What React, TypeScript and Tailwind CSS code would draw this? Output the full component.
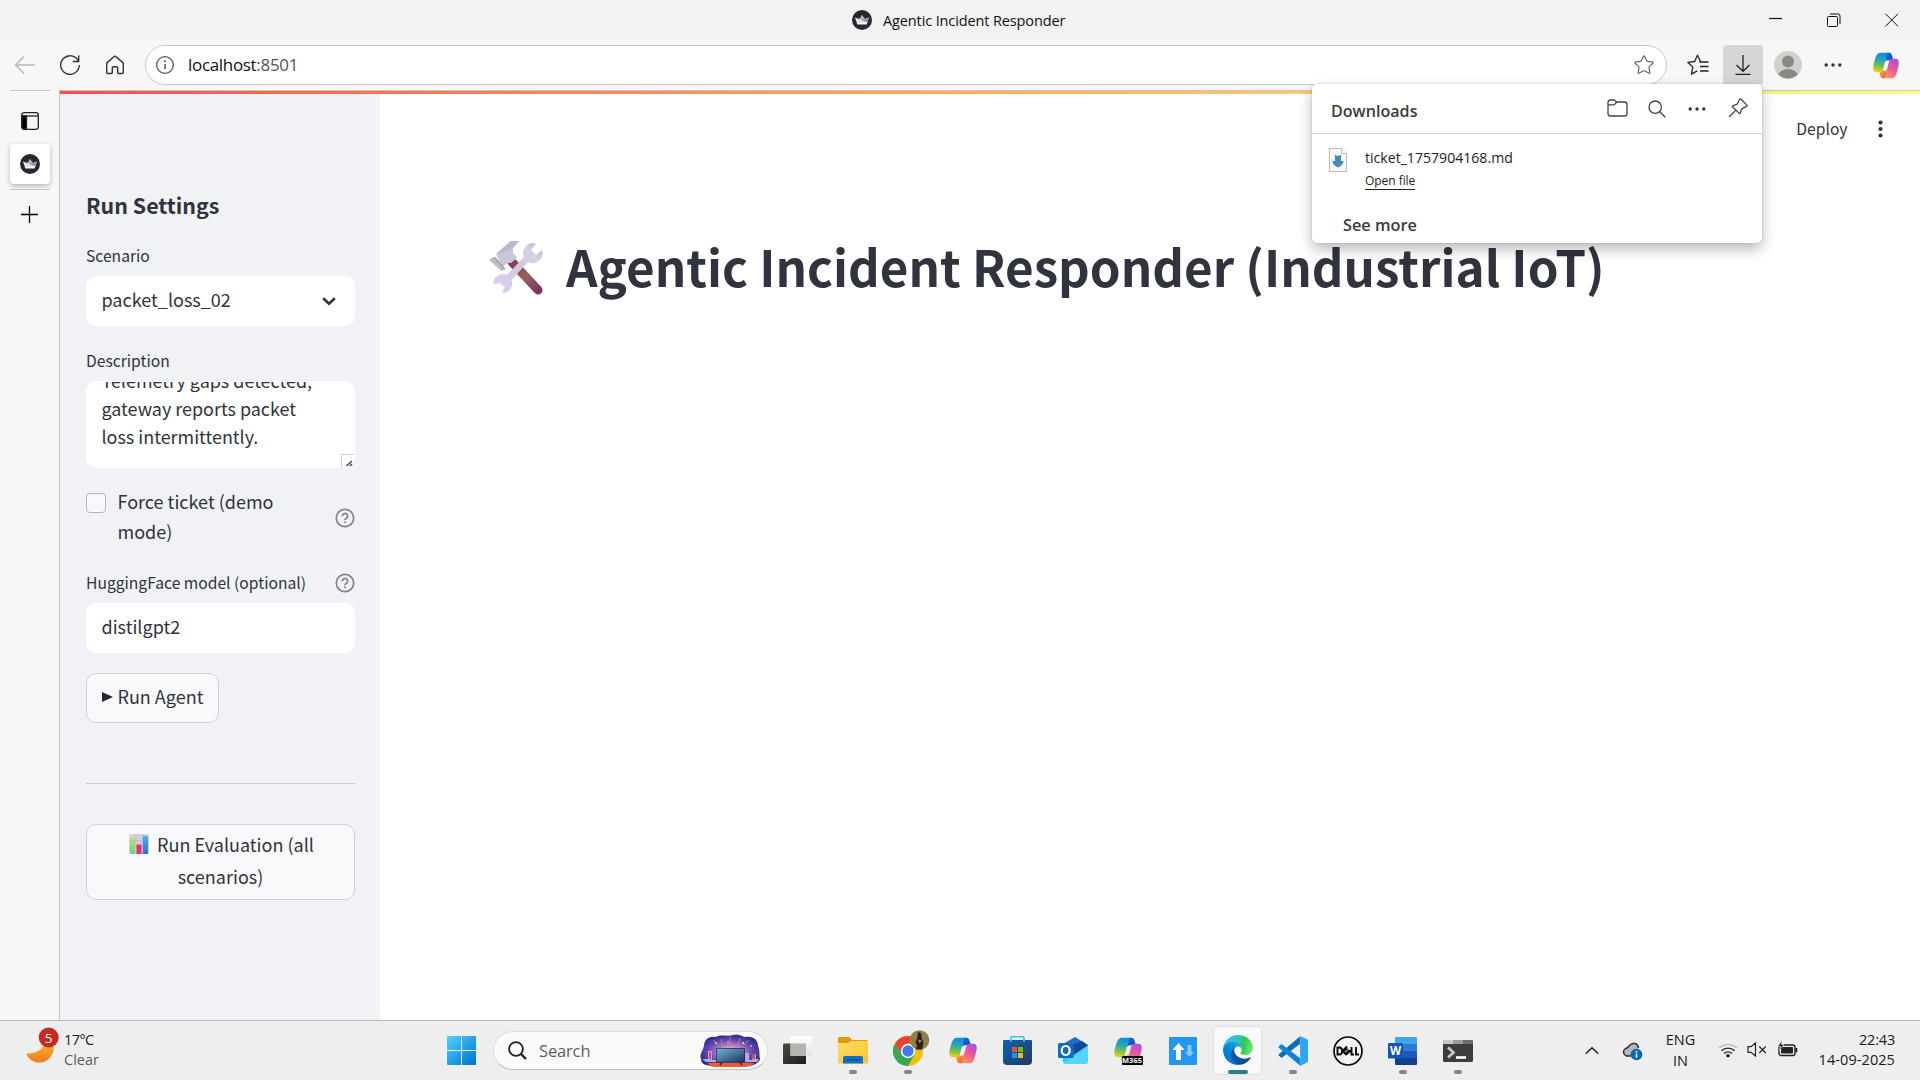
import { type ReactNode } from "react";
import { Star } from "lucide-react";

const ui = "font-['Open_Sans','Noto_Sans',sans-serif]";
const app = "font-['Noto_Sans_CJK_SC','Open_Sans',sans-serif]";

function T({ className = "", children }: { className?: string; children: ReactNode }) {
  return <span className={`block whitespace-nowrap ${className}`}>{children}</span>;
}

function Crown() {
  return (
    <svg className="size-5 shrink-0" viewBox="0 0 20 20">
      <circle cx="10" cy="10" r="10" fill="#262730" />
      <path d="M3 7.500 7.500 9 10 5.200 12.700 9 17 7.500 15 13.500H5Z" fill="#e8e8ea" />
      <path d="M10 5.200 12.700 9 9.500 10.500 7.500 9Z" fill="#b4b4ba" />
      <path d="M17 7.500 9.500 10.500 15 12Z" fill="#8f9097" />
      <path d="M5 13h10l-.4 1.400H5.400Z" fill="#fff" />
    </svg>
  );
}

function Copilot({ id, className }: { id: string; className: string }) {
  return (
    <svg className={className} viewBox="0 4 48 40" preserveAspectRatio="none">
      <defs>
        <linearGradient id={`${id}a`} x1="14" y1="5" x2="9" y2="34" gradientUnits="userSpaceOnUse">
          <stop offset="0" stopColor="#0d8fe6" /><stop offset=".35" stopColor="#23a5b8" /><stop offset=".65" stopColor="#6fbf50" /><stop offset="1" stopColor="#f8d40c" />
        </linearGradient>
        <linearGradient id={`${id}b`} x1="8" y1="35" x2="24" y2="5" gradientUnits="userSpaceOnUse">
          <stop offset="0" stopColor="#a54dea" /><stop offset=".5" stopColor="#ee5a91" /><stop offset="1" stopColor="#ff9a5c" />
        </linearGradient>
        <linearGradient id={`${id}c`} x1="24" y1="5" x2="36" y2="17" gradientUnits="userSpaceOnUse">
          <stop offset="0" stopColor="#0a78dd" /><stop offset="1" stopColor="#173fb5" />
        </linearGradient>
        <linearGradient id={`${id}d`} x1="12" y1="31" x2="24" y2="43" gradientUnits="userSpaceOnUse">
          <stop offset="0" stopColor="#ffb23e" /><stop offset="1" stopColor="#f0523c" />
        </linearGradient>
      </defs>
      <path fill={`url(#${id}c)`} d="M34.100 8.300A4.600 4.600 0 0 0 29.700 5h-5l-3 16.400.4-2a4.600 4.600 0 0 1 4.400-3.300h7.900l3.300 1.300 3.100-1.300a4.600 4.600 0 0 1-5.400-3.300Z" />
      <path fill={`url(#${id}d)`} d="M14.300 39.700A4.600 4.600 0 0 0 18.800 43h4l3.600-16.700-.4 2.200a4.600 4.600 0 0 1-4.400 3.400h-7.900l-2.800-1.500-3.100 1.500a4.600 4.600 0 0 1 5.400 3.300Z" />
      <path fill={`url(#${id}a)`} d="M29.500 5H13.500C8.900 5 6.100 11 4.300 17.100 2.100 24.300-.7 33.900 7.500 33.900h6.900c2 0 3.700-1.300 4.200-3.200 1.200-4 3.200-11.200 5.300-18.200C25 9.400 25.600 6.800 26.800 5.100 27.400 5 28.500 5 29.500 5Z" />
      <path transform="rotate(180 24 24)" fill={`url(#${id}b)`} d="M29.500 5H13.500C8.900 5 6.100 11 4.300 17.100 2.100 24.300-.7 33.900 7.500 33.900h6.900c2 0 3.700-1.300 4.200-3.200 1.200-4 3.200-11.200 5.300-18.200C25 9.400 25.600 6.800 26.800 5.100 27.400 5 28.500 5 29.500 5Z" />
    </svg>
  );
}

function Dots({ className = "" }: { className?: string }) {
  return (
    <svg className={`h-1 w-[18px] shrink-0 ${className}`} viewBox="0 0 18 4" fill="#333">
      <circle cx="2.200" cy="2" r="1.700" /><circle cx="9" cy="2" r="1.700" /><circle cx="15.800" cy="2" r="1.700" />
    </svg>
  );
}

function Help() {
  return (
    <svg className="size-5 shrink-0" viewBox="0 0 20 20" fill="none" stroke="#82838c" strokeWidth="1.700">
      <circle cx="10" cy="10" r="8.700" />
      <path d="M7.400 8.200a2.600 2.600 0 1 1 3.800 2.200c-.9.500-1.200.8-1.200 1.600" />
      <path d="M10 13.300v1.800" />
    </svg>
  );
}

function TitleBar() {
  return (
    <div className={`flex h-10 shrink-0 items-center bg-[#f2f2f2] ${ui}`}>
      <div className="flex w-[1769px] items-center pl-[852px]">
        <Crown />
        <T className="ml-[11px] pt-px text-[14.500px] leading-5 tracking-[-0.120px] text-[#111]">Agentic Incident Responder</T>
      </div>
      <svg className="h-[14px] w-[130px]" viewBox="0 0 130 14" fill="none" stroke="#111" strokeWidth="1">
        <path d="M0 5.500h13" strokeWidth="1.200" />
        <rect x="58.500" y="3.500" width="10" height="10" rx="1" />
        <path d="M61 1h8a2 2 0 0 1 2 2v8" />
        <path d="m116.500.800 12.500 12.500m0-12.500-12.500 12.500" />
      </svg>
    </div>
  );
}

function DownloadsMenu() {
  return (
    <div className="absolute top-[39px] right-px z-10 h-[159px] w-[450px] rounded-[5px] bg-white shadow-[0_6px_14px_rgba(0,0,0,0.28),0_0_2px_rgba(0,0,0,0.2)]">
      <div className="flex h-[50px] items-center border-b border-[#d0d0d0] pr-[14px] pl-[19px]">
        <T className="mt-[5px] text-[16.100px] leading-6 font-semibold text-[#3b3b3b]">Downloads</T>
        <svg className="mb-px ml-auto h-[18px] w-[21px]" viewBox="0 0 21 18" fill="none" stroke="#444" strokeWidth="1.300">
          <path d="M1 14V3.500A2.500 2.500 0 0 1 3.500 1h3.200c.6 0 1 .2 1.400.6L9.500 3h8A2.500 2.500 0 0 1 20 5.500v9a2.500 2.500 0 0 1-2.500 2.500h-14A2.500 2.500 0 0 1 1 14.500Z" />
          <path d="M1 5.800h5.600c.5 0 1-.2 1.300-.6L9.700 3" />
        </svg>
        <svg className="ml-5 size-[18px]" viewBox="0 0 18 18" fill="none" stroke="#444" strokeWidth="1.300">
          <circle cx="7.200" cy="7.200" r="6.200" /><path d="m11.700 11.700 5.600 5.600" />
        </svg>
        <Dots className="ml-[22px]" />
        <svg className="mb-[2px] ml-[22px] size-[20px]" viewBox="0 0 20 20" fill="none" stroke="#444" strokeWidth="1.300" strokeLinejoin="round">
          <path d="M11.600 1.300c.5-.5 1-.4 1.500 0l5.600 5.600c.5.500.4 1.200-.2 1.500l-4.700 2.400-1.600 4.400c-.2.500-.7.500-1 .2L4.600 8.800c-.4-.4-.3-.9.200-1l4.400-1.600Z" />
          <path d="m7.500 12.500-6.500 6.500" />
        </svg>
      </div>
      <div className="flex pl-[17px] pt-[14px]">
        <svg className="h-[24px] w-[18px]" viewBox="0 0 18 24">
          <path d="M.5.500h12l5 5v18H.5Z" fill="#f8f8f8" stroke="#bbb" />
          <path d="M12.500.5v5h5" fill="#fff" stroke="#bbb" />
          <path d="M6 6.500l1.500 1.200h3L12 6.500V13h2.500c0 3-3 5.500-5.500 6.500-2.500-1-5.500-3.500-5.500-6.500H6Z" fill="#448cb0" />
        </svg>
        <div className="ml-[18px]">
          <T className="text-[14.100px] leading-5 text-[#222]">ticket_1757904168.md</T>
          <T className="mt-[4px] w-fit border-b border-[#222] text-[12px] leading-[17px] tracking-[-0.050px] text-[#222]">Open file</T>
        </div>
      </div>
      <T className="mt-[23px] ml-[31px] text-[16.300px] leading-6 font-semibold text-[#3b3b3b]">See more</T>
    </div>
  );
}

function Toolbar() {
  return (
    <div className={`flex h-[50px] shrink-0 items-center bg-[#f7f7f7] ${ui}`}>
      <svg className="ml-[14px] h-5 w-[22px]" viewBox="0 0 22 20" fill="none" stroke="#b5b5b5" strokeWidth="1.300">
        <path d="M21 10H1.500M10 1.500 1.500 10l8.500 8.500" />
      </svg>
      <svg className="ml-[24px] size-5" viewBox="0 0 20 20" fill="none" stroke="#333" strokeWidth="1.400">
        <path d="M18.600 6.500A9.300 9.300 0 1 0 19.300 10M18.700.5v6h-6" />
      </svg>
      <svg className="ml-[25px] h-[20px] w-5" viewBox="0 0 20 20" fill="none" stroke="#333" strokeWidth="1.400" strokeLinejoin="round">
        <path d="M1.700 8.800c0-.6.2-1 .7-1.400l6.500-5.700c.7-.6 1.500-.6 2.200 0l6.500 5.700c.5.400.7.800.7 1.400v8.700c0 .6-.4 1-1 1h-3.600c-.6 0-1-.4-1-1v-4.800c0-.6-.4-1-1-1H8.300c-.6 0-1 .4-1 1v4.800c0 .6-.4 1-1 1H2.700c-.6 0-1-.4-1-1Z" />
      </svg>
      <div className="ml-5 flex h-10 w-[1522px] items-center rounded-full border border-[#cacaca] bg-white pr-[11px] pl-[10px]">
        <svg className="size-[18px]" viewBox="0 0 18 18" fill="none" stroke="#555" strokeWidth="1.300">
          <circle cx="9" cy="9" r="8.300" /><path d="M9 8v5" strokeWidth="1.500" /><circle cx="9" cy="5.300" r="1" fill="#555" stroke="none" />
        </svg>
        <T className="ml-[14px] text-[17px] leading-6 tracking-[-0.320px] text-[#111]">localhost<span className="text-[#555]">:8501</span></T>
        <Star className="ml-auto size-[22px] text-[#666]" strokeWidth={1.300} />
      </div>
      <svg className="ml-[20px] size-[22px]" viewBox="0 0 22 22" fill="none" stroke="#222" strokeWidth="1.300" strokeLinejoin="round">
        <path d="M13.500 7.500 10.500 1.200 7.600 7.500.8 8.300l5 4.800-1.300 7 5.700-3.200M12.500 8h9M13 12.500h8.500M13 17h8.500" />
      </svg>
      <div className="relative mb-px ml-[14px] flex h-[39px] w-10 items-center justify-center rounded-t-[4px] bg-[#d6d6d6]">
        <svg className="h-[20px] w-4" viewBox="0 0 16 20" fill="none" stroke="#222" strokeWidth="1.300">
          <path d="M8 0v16M1.500 10 8 16.300 14.500 10M.5 19.300h15" />
        </svg>
        <DownloadsMenu />
      </div>
      <svg className="ml-[11px] size-[28px]" viewBox="0 0 28 28">
        <defs><clipPath id="av"><circle cx="14" cy="14" r="13.500" /></clipPath></defs>
        <circle cx="14" cy="14" r="14" fill="#d3d1cd" />
        <g clipPath="url(#av)" fill="#8a8886"><circle cx="14" cy="10.500" r="6" /><ellipse cx="14" cy="25" rx="10" ry="7" /></g>
      </svg>
      <Dots className="ml-[22px]" />
      <Copilot id="tb" className="ml-[30px] h-[27px] w-[28px]" />
    </div>
  );
}

function TabStrip() {
  return (
    <div className="flex w-[60px] shrink-0 flex-col items-center border-r border-[#bfc2c2] bg-[#f7f7f7]">
      <div className="ml-px h-px w-10 bg-[#c6c6c6]" />
      <svg className="mt-[21px] h-[18px] w-[18px]" viewBox="0 0 18 18" fill="none" stroke="#222" strokeWidth="1.300">
        <rect x=".7" y=".7" width="16.600" height="16.600" rx="2.500" /><path d="M1 4h16" /><path d="M1 4h4.500v13H3a2 2 0 0 1-2-2Z" fill="#000" />
      </svg>
      <div className="mt-[14px] ml-px flex size-10 items-center justify-center rounded-[4px] bg-white shadow-[0_2px_5px_rgba(0,0,0,0.28)]"><Crown /></div>
      <div className="mt-[5px] ml-px h-px w-10 bg-[#c6c6c6]" />
      <svg className="mt-[16px] size-[17px]" viewBox="0 0 17 17" stroke="#000" strokeWidth="1.300"><path d="M8.500 0v17M0 8.500h17" /></svg>
    </div>
  );
}

function Sidebar() {
  return (
    <div className={`flex w-[320px] shrink-0 flex-col bg-[#f0f2f6] pr-[25px] pl-[26px] text-[#31333f] ${app}`}>
      <T className="mt-[96px] text-[21.400px] leading-[30px] font-semibold">Run Settings</T>
      <T className="mt-[24px] text-[15.650px] leading-6">Scenario</T>
      <div className="mt-2 flex h-[50px] items-center justify-between rounded-[10px] bg-white pr-[19px] pl-[15.500px]">
        <T className="pb-1 text-[18px] leading-[28px]">packet_loss_02</T>
        <svg className="h-[9px] w-[14px]" viewBox="0 0 14 9" fill="none" stroke="#31333f" strokeWidth="2.600"><path d="m1.200 1.200 5.800 5.500 5.800-5.500" /></svg>
      </div>
      <T className="mt-[23px] text-[15.650px] leading-6">Description</T>
      <div className="relative mt-2 h-[87px] rounded-[10px] bg-white pt-px pl-[15.500px]">
        <div className="h-[85px] overflow-hidden">
          <div className="-mt-[16px] text-[17.950px] leading-7">
            <T>Telemetry gaps detected,</T>
            <T>gateway reports packet</T>
            <T>loss intermittently.</T>
          </div>
        </div>
        <svg className="absolute right-px bottom-px size-[13px]" viewBox="0 0 13 13" fill="none" stroke="#ccc">
          <path d="M.5 13V.5H13" /><path d="m5.500 12 5.500-5M9 12l2-2" stroke="#444" strokeWidth="1.500" />
        </svg>
      </div>
      <div className="mt-[18px] flex items-start">
        <div className="mt-[7px] size-5 shrink-0 rounded-[4px] border border-[#b3b4bb] bg-[#f9f9fb]" />
        <div className="ml-[11.500px] text-[18px] leading-[30px]">
          <T>Force ticket (demo</T>
          <T>mode)</T>
        </div>
        <div className="mt-[22px] ml-auto"><Help /></div>
      </div>
      <div className="mt-[25px] flex items-center justify-between">
        <T className="text-[15.650px] leading-6">HuggingFace model (optional)</T>
        <Help />
      </div>
      <div className="mt-[8px] flex h-[50px] items-center rounded-[10px] bg-white pl-[15.500px]">
        <T className="pb-1 text-[18px] leading-7">distilgpt2</T>
      </div>
      <div className="mt-[20px] flex h-[50px] w-[133px] items-center rounded-[10px] border border-[#d0d1d7] bg-[#f9f9fb] pl-[15px]">
        <svg className="mb-[3px] h-[10px] w-[11px]" viewBox="0 0 11 10"><path d="M0 0 11 5 0 10Z" fill="#262730" /></svg>
        <T className="ml-[4.500px] pb-1 text-[18px] leading-7">Run Agent</T>
      </div>
      <div className="mt-[60px] h-px bg-[#cbccd2]" />
      <div className="mt-[40px] flex h-[76px] flex-col items-center rounded-[10px] border border-[#d0d1d7] bg-[#f9f9fb] pt-[3px] text-[18px] leading-8">
        <div className="flex items-center pl-[2px]">
          <svg className="mr-[8px] size-5" viewBox="0 0 20 20">
            <defs>
              <linearGradient id="g1" x1="0" y1="0" x2="0" y2="1"><stop stopColor="#b5e35a" /><stop offset="1" stopColor="#5fd68f" /></linearGradient>
              <linearGradient id="g2" x1="0" y1="0" x2="0" y2="1"><stop stopColor="#3fb0f5" /><stop offset="1" stopColor="#2f6fc4" /></linearGradient>
            </defs>
            <rect width="20" height="20" rx="2" fill="#d5d0df" />
            <path d="M0 6.500h20M0 13h20M7 0v20M13.500 0v20" stroke="#b9b2c8" strokeWidth=".7" />
            <rect x="1" y="4.500" width="5" height="15.500" fill="url(#g1)" /><rect x="7.500" y="10.500" width="5" height="9.500" fill="#e8316f" /><rect x="14" y="2" width="5" height="18" fill="url(#g2)" />
          </svg>
          <T>Run Evaluation (all</T>
        </div>
        <T>scenarios)</T>
      </div>
    </div>
  );
}

function Tools() {
  return (
    <svg className="h-[54px] w-[55px] shrink-0" viewBox="0 0 55 54">
      <defs>
        <linearGradient id="w" x1="50" y1="2" x2="8" y2="50" gradientUnits="userSpaceOnUse"><stop stopColor="#bdb6c6" /><stop offset=".2" stopColor="#d9cfe8" /><stop offset=".5" stopColor="#d0cbd8" /><stop offset="1" stopColor="#e0cdf5" /></linearGradient>
        <linearGradient id="h" x1="22" y1="18" x2="50" y2="54" gradientUnits="userSpaceOnUse"><stop stopColor="#7b3560" /><stop offset=".5" stopColor="#96625a" /><stop offset="1" stopColor="#7b2a63" /></linearGradient>
      </defs>
      <path d="m23 21 26 28" stroke="url(#h)" strokeWidth="9" strokeLinecap="round" />
      <path d="m7 13 15-13h8l-6 7v5l3 3q1 2 0 3l-5 4h-4l-5 4Z" fill="#cbc6d6" />
      <path d="m7 13 15-13h8l-7 8Z" fill="#bdb6ce" />
      <path d="m0 19 4-3q2-.5 3 .5l8 9q1 1.500 0 3l-2 2Z" fill="#c2bccd" />
      <path d="m5 16.500 11 12" stroke="#a79fb5" strokeWidth="1.300" />
      <path d="M47 2.500a10 10 0 0 0-12 13.500L18 34A9.500 9.500 0 0 0 4.500 43.500l6-1.500 5 4-2.500 6a9.500 9.500 0 0 0 9.500-13L39 21a10 10 0 0 0 14-12l-6 5-5-5Z" fill="url(#w)" />
    </svg>
  );
}

function Main() {
  return (
    <div className={`flex grow flex-col bg-white text-[#31333f] ${app}`}>
      <div className="mt-[25px] flex h-5 items-center justify-end pr-[37px]">
        <T className="text-[15.650px] leading-5">Deploy</T>
        <svg className="ml-[30.500px] h-[18px] w-[5px]" viewBox="0 0 5 18" fill="#31333f"><circle cx="2.500" cy="2.500" r="2.100" /><circle cx="2.500" cy="9" r="2.100" /><circle cx="2.500" cy="15.500" r="2.100" /></svg>
      </div>
      <div className="mt-[99px] ml-[109px] flex items-center">
        <Tools />
        <T className="ml-[22px] pb-1 text-[49.310px] leading-[56px] font-bold">Agentic Incident Responder (Industrial IoT)</T>
      </div>
    </div>
  );
}

function Chrome() {
  return (
    <svg className="h-[36px] w-[37px] shrink-0" viewBox="0 0 37 36">
      <circle cx="15" cy="21" r="15" fill="#fbbc04" />
      <path d="M2 13.500A15 15 0 0 0 15 36l6.500-11.300L15 21 8.500 24.700Z" fill="#34a853" />
      <path d="M2 13.500 8.500 24.700l6.500-3.700V13.500H28A15 15 0 0 0 2 13.500Z" fill="#ea4335" />
      <circle cx="15" cy="21" r="7.200" fill="#fff" /><circle cx="15" cy="21" r="5.700" fill="#3d7bf0" />
      <circle cx="26.500" cy="10" r="9.800" fill="#8d8045" />
      <path d="M25 2.500c3-1 4 2 3.500 5l2 5-1.500 7h-6l1-4-1.500-3 1.500-4Z" fill="#2a2222" />
      <path d="M25.500 9.500 29 11l-3 2Z" fill="#c48d74" />
    </svg>
  );
}

function Edge() {
  return (
    <svg className="size-[30px]" viewBox="0 0 256 256">
      <defs>
        <linearGradient id="e1" x1="63" y1="178" x2="241" y2="178" gradientUnits="userSpaceOnUse"><stop stopColor="#0c59a4" /><stop offset="1" stopColor="#114a8b" /></linearGradient>
        <linearGradient id="e2" x1="157" y1="100" x2="46" y2="222" gradientUnits="userSpaceOnUse"><stop stopColor="#1b9de2" /><stop offset=".2" stopColor="#1595df" /><stop offset=".7" stopColor="#0680d7" /><stop offset="1" stopColor="#0078d4" /></linearGradient>
        <linearGradient id="e3" x1="20" y1="60" x2="250" y2="120" gradientUnits="userSpaceOnUse"><stop stopColor="#35c1f1" /><stop offset=".4" stopColor="#2bc3d2" /><stop offset=".7" stopColor="#36c752" /><stop offset="1" stopColor="#66eb6e" /></linearGradient>
      </defs>
      <g transform="translate(-4.630 -4.920)">
        <path fill="url(#e1)" d="M235.680 195.460a93.730 93.730 0 0 1-10.540 4.710 101.870 101.870 0 0 1-35.900 6.460c-47.320 0-88.540-32.550-88.540-74.320A31.480 31.480 0 0 1 117.130 105c-42.800 1.800-53.800 46.400-53.800 72.530 0 73.880 68.090 81.370 82.760 81.370 7.910 0 19.840-2.300 27-4.560l1.310-.44a128.340 128.340 0 0 0 66.600-52.800 4 4 0 0 0-5.320-5.640Z" />
        <path fill="url(#e2)" d="M110.340 246.340A79.200 79.200 0 0 1 87.600 225a80.720 80.720 0 0 1 29.530-120c3.120-1.470 8.450-4.130 15.540-4a32.350 32.350 0 0 1 25.690 13 31.880 31.880 0 0 1 6.360 18.660c0-.21 24.460-79.600-80-79.600-43.900 0-80 41.660-80 78.210a130.150 130.150 0 0 0 12.110 56 128 128 0 0 0 156.380 67.110 75.550 75.550 0 0 1-62.780-8Z" />
        <path fill="url(#e3)" d="M156.940 153.780c-.81 1.050-3.300 2.500-3.300 5.660 0 2.610 1.700 5.120 4.720 7.230 14.380 10 41.490 8.680 41.560 8.680a59.560 59.560 0 0 0 30.270-8.350 61.380 61.380 0 0 0 30.430-52.880c.26-22.410-8-37.310-11.340-43.910-21.190-41.450-66.930-65.290-116.670-65.290a128 128 0 0 0-128 126.200c.48-36.540 36.800-66.050 80-66.050 3.500 0 23.460.34 42 10.070 16.340 8.580 24.900 18.940 30.850 29.210 6.180 10.670 7.280 24.150 7.280 29.520s-2.740 13.330-7.800 19.910Z" />
      </g>
    </svg>
  );
}

function Slot({ children, run = false }: { children: ReactNode; run?: boolean }) {
  return (
    <div className="flex h-[59px] w-[55px] shrink-0 flex-col items-center">
      <div className="flex h-[49px] shrink-0 items-center pt-[10px]">{children}</div>
      {run && <div className="h-1 w-2 rounded-full bg-[#868686]" />}
    </div>
  );
}

function Taskbar() {
  return (
    <div className={`flex h-[60px] shrink-0 border-t border-[#b9b9b9] bg-[#eee] ${ui}`}>
      <svg className="mt-[6px] ml-[26px] h-[38px] w-[34px] shrink-0" viewBox="0 0 34 38">
        <defs><linearGradient id="m" x1="0" y1="0" x2="0" y2="1"><stop stopColor="#f3c62c" /><stop offset="1" stopColor="#f07a1c" /></linearGradient></defs>
        <path d="M24 10c8 9 3 25-10.500 25.600C7 35.800 2 31.500.3 26.500 10 27.500 20 21 18 13Z" fill="url(#m)" />
        <circle cx="22.700" cy="10.500" r="10" fill="#c42b1c" />
        <text x="22.700" y="15.500" textAnchor="middle" fontSize="13.500" fill="#fff">5</text>
      </svg>
      <div className="mt-[9px] ml-[4px] w-[383px] shrink-0 text-[14.500px] leading-5">
        <T className="w-fit tracking-[-0.600px] text-[#222]">17°C</T>
        <T className="w-fit text-[#5c5c5c]">Clear</T>
      </div>
      <svg className="mt-[15px] size-[29px] shrink-0" viewBox="0 0 29 29">
        <defs><linearGradient id="win" x1="0" y1="0" x2="1" y2="1"><stop stopColor="#4fd3ff" /><stop offset="1" stopColor="#0070d2" /></linearGradient></defs>
        <path fill="url(#win)" d="M1 0h13v14H0V1Q0 0 1 0ZM15 0h13q1 0 1 1v13H15ZM0 15h14v14H1q-1 0-1-1ZM15 15h14v13q0 1-1 1H15Z" />
      </svg>
      <div className="mt-[10px] ml-[17px] flex h-[39px] w-[275px] shrink-0 items-center rounded-full border border-[#dcdcdc] border-b-[#bfbfbf] bg-[#fafafa] pl-[14px]">
        <svg className="size-[19px]" viewBox="0 0 19 19" fill="none" stroke="#222"><circle cx="8" cy="8" r="6.900" strokeWidth="1.800" /><path d="m13 13 5 5" strokeWidth="2.400" /></svg>
        <T className="ml-[12px] pt-px text-[16.500px] leading-6 tracking-[-0.150px] text-[#5f5f5f]">Search</T>
        <svg className="mr-[7px] ml-auto h-[33px] w-[60px]" viewBox="0 0 60 33">
          <defs>
            <radialGradient id="tv" cx=".5" cy=".55" r=".6"><stop stopColor="#ffd9a0" /><stop offset=".3" stopColor="#c48ac0" /><stop offset=".6" stopColor="#6a4bb5" /><stop offset="1" stopColor="#16247c" /></radialGradient>
            <linearGradient id="scr" x1="0" y1="0" x2="1" y2="1"><stop stopColor="#6fb6d8" /><stop offset="1" stopColor="#23335f" /></linearGradient>
          </defs>
          <path d="M4 12C4 5 10 2 16 3c5-3 12 0 17-2 6-2 9 2 13 2 7-1 12 3 12 9 2 4 1 7 2 13-1 4-7 7-12 7H14C6 32 1 30 1 25c-2-5 2-8 3-13Z" fill="url(#tv)" />
          <path d="M8 29h46c-2 3-6 4-10 4H16c-4 0-7-1-8-4Z" fill="#ee5a28" />
          <path d="M2 25h6v-8h4v9h4v2H6ZM45 19h4v7h3v-6h4v5h3l-2 3H45Z" fill="#b9a5e0" />
          <path d="M9 18h2v7H9ZM52 20h3v5h-3Z" fill="#c8506a" />
          <path d="m19 12-6-6m9 5-1-6m9 6V3m8 8 2-7m3 8 6-6" stroke="#f3b98f" strokeWidth=".7" opacity=".7" />
          <g fill="#ffe7c2"><circle cx="16" cy="9" r=".9" /><circle cx="28" cy="8" r=".7" /><circle cx="43" cy="9" r=".9" /><circle cx="51" cy="12" r=".8" /></g>
          <rect x="16" y="14" width="29" height="14.500" rx="1" fill="#1c2350" /><rect x="16.700" y="14.700" width="27.600" height="13" fill="url(#scr)" />
          <path d="M22 28.500 20 31M40 28.500l2 2.500" stroke="#22244a" strokeWidth="1.300" />
        </svg>
      </div>
      <svg className="mt-[15px] mr-[12px] ml-[15px] h-[29px] w-[30px] shrink-0" viewBox="0 0 30 29">
        <defs>
          <linearGradient id="tk" x1="0" y1="0" x2="1" y2="1"><stop stopColor="#4a4a46" /><stop offset="1" stopColor="#1c1c1c" /></linearGradient>
          <linearGradient id="tl" x1="0" y1="0" x2="0" y2="1"><stop stopColor="#fff" /><stop offset="1" stopColor="#e2e2e2" /></linearGradient>
        </defs>
        <rect x="0" y="7.500" width="23" height="20.500" rx="1" fill="url(#tk)" />
        <rect x="7.500" y="0" width="22" height="20" rx="1" fill="url(#tl)" />
        <rect x="7.500" y="7.500" width="15.500" height="12.500" fill="#b4b4b2" />
      </svg>
      <Slot run>
        <svg className="h-[27px] w-[30px]" viewBox="0 0 30 27">
          <defs><linearGradient id="fo" x1="0" y1="0" x2="1" y2="1"><stop stopColor="#ffdd6b" /><stop offset="1" stopColor="#fcc12e" /></linearGradient></defs>
          <path d="M0 1.500Q0 0 1.500 0h9q1 0 1.700.8L14 3h14.500Q30 3 30 4.500V10H0Z" fill="#dd9b07" />
          <path d="M0 6h9.500q1 0 1.800-.8L13 4h17v21.500q0 1-1 1H1q-1 0-1-1Z" fill="url(#fo)" />
          <path d="M5 26.500V21q0-2 2-2h16q2 0 2 2v5.500Z" fill="#1272c0" /><path d="M8.500 22.800h13" stroke="#0b4f90" strokeWidth="1.400" />
        </svg>
      </Slot>
      <Slot run><div className="-mt-[6px] ml-[7px]"><Chrome /></div></Slot>
      <Slot><Copilot id="t1" className="h-[27px] w-[30px]" /></Slot>
      <Slot>
        <svg className="size-[29px]" viewBox="0 0 29 29">
          <defs><linearGradient id="st" x1="0" y1="0" x2="1" y2="1"><stop stopColor="#0f63b4" /><stop offset="1" stopColor="#25385f" /></linearGradient></defs>
          <path d="M0 5q0-1 1-1h27q1 0 1 1v20q0 4-4 4H4q-4 0-4-4Z" fill="url(#st)" />
          <path d="M8 6V2q0-1.300 1.300-1.300h10.400Q21 .7 21 2v4" fill="none" stroke="#2fc0f7" strokeWidth="1.600" />
          <path d="M9 11h5v5H9Z" fill="#f25022" /><path d="M15 11h5v5h-5Z" fill="#7fba00" /><path d="M9 17h5v5H9Z" fill="#00a4ef" /><path d="M15 17h5v5h-5Z" fill="#ffb900" />
        </svg>
      </Slot>
      <Slot>
        <svg className="h-[27px] w-[30px]" viewBox="0 0 30 27">
          <path d="M5 7 17 0l13 8-14 10Z" fill="#1f6fc5" /><path d="m14 8 10-4 6 4.500-14 9Z" fill="#104a9c" />
          <path d="M5 13v11q0 3 3 3h19q3 0 3-3V9L14 19Z" fill="#38c6f4" /><path d="M30 10v14q0 3-3 3H8l-2-1Z" fill="#5fe0fb" opacity=".65" />
          <rect y="6" width="15.500" height="15" rx="1.500" fill="#0f6cbd" />
          <ellipse cx="7.700" cy="13.500" rx="4" ry="4.500" fill="none" stroke="#fff" strokeWidth="2.200" />
        </svg>
      </Slot>
      <Slot>
        <div className="relative">
          <Copilot id="t2" className="h-[27px] w-[30px]" />
          <T className="absolute right-0 -bottom-px h-[9px] w-[21px] rounded-[1px] bg-black text-center text-[7.500px] leading-[9px] font-bold text-white">M365</T>
        </div>
      </Slot>
      <Slot>
        <svg className="size-[28px]" viewBox="0 0 28 28">
          <rect width="28" height="28" rx="1" fill="#2196f3" /><path d="m9.500 6 6 7h-3.500v10H7V13H3.500Z" fill="#fff" /><path d="M20.500 20 16 15h2.500V8h4v7H25Z" fill="#86c5f8" />
        </svg>
      </Slot>
      <div className="mx-[3px] mt-[5px] flex h-[49px] w-[49px] shrink-0 flex-col items-center rounded-[5px] border border-[#e2e2e2] bg-[#f9f9f9] pt-[8px]">
        <Edge />
        <div className="mt-[5px] h-1 w-5 rounded-full bg-[#26808f]" />
      </div>
      <Slot run>
        <svg className="size-[30px]" viewBox="0 0 100 100">
          <path d="m2 65 8 7q2 1 4 0L74 26V2q-2 0-4 2L3 61q-2 2-1 4Z" fill="#0b6cb4" />
          <path d="m2 35 8-7q2-1 4 0l60 46v24q-2 0-4-2L3 39q-2-2-1-4Z" fill="#0f86d2" />
          <path d="M74 1q-1 1 0 3v92q-1 2 0 3l3-.5 20-10q3-1 3-4V15q0-3-3-4L77 1.500Z" fill="#2aa6f2" />
        </svg>
      </Slot>
      <Slot>
        <svg className="size-[30px]" viewBox="0 0 30 30" fill="none" stroke="#0b0b0b">
          <circle cx="15" cy="15" r="14" strokeWidth="1.700" fill="#f4f4f4" />
          <path d="M4.500 11.500v7h1.700q3 0 3-3.500t-3-3.500ZM14 10.500 9.500 15l3.500 3.500 5.500-4.500M11 15l3.500-2.500M13 17l3.500-3M18.500 11v7.500H21M23 11v7.500h3" strokeWidth="1.900" />
        </svg>
      </Slot>
      <Slot run>
        <svg className="h-[28px] w-[29px]" viewBox="0 0 29 28">
          <path d="M7 1q0-1 1-1h20q1 0 1 1v6H7Z" fill="#41a5ee" /><path d="M7 7h22v7H7Z" fill="#2b7cd3" /><path d="M7 14h22v7H7Z" fill="#185abd" /><path d="M7 21h22v6q0 1-1 1H8q-1 0-1-1Z" fill="#103f91" />
          <rect y="6" width="15" height="15.500" rx="1.300" fill="#1554b0" />
          <text x="7.500" y="18" textAnchor="middle" fontSize="11.500" fontWeight="700" fill="#fff">W</text>
        </svg>
      </Slot>
      <Slot run>
        <svg className="h-[22px] w-[30px]" viewBox="0 0 30 22">
          <rect width="30" height="22" rx="1.500" fill="#3d3d3d" /><path d="M0 4V1.500Q0 0 1.500 0H10v4Z" fill="#c9c9c9" /><path d="M10 0h10v4H10Z" fill="#9b9b9b" /><path d="M20 0h8.500Q30 0 30 1.500V4H20Z" fill="#6c6c6c" />
          <path d="m5 7.500 5.500 5-5.500 5" fill="none" stroke="#c8c8c8" strokeWidth="2.700" /><path d="M13 17.500h10" stroke="#fff" strokeWidth="2.600" />
        </svg>
      </Slot>
      <div className="ml-auto flex pr-[25px]">
        <svg className="mt-[25px] h-[9px] w-[14px]" viewBox="0 0 14 9" fill="none" stroke="#222" strokeWidth="1.600"><path d="m.8 7.800 6.200-6 6.200 6" /></svg>
        <svg className="mt-[21px] ml-[23px] h-[19px] w-[21px]" viewBox="0 0 21 19">
          <path d="M4.500 14A4 4 0 0 1 3 7q1-1 2.500-1.300Q9 .7 13 1.500q3 .7 3.500 4.500" fill="#b9b9b9" stroke="#333" strokeWidth="1.500" /><path d="M4.500 14 13 5l4 2-6 7Z" fill="#b0b0b0" /><path d="M4 14h5" stroke="#333" strokeWidth="1.500" />
          <circle cx="14.500" cy="12.500" r="5.800" fill="#0067c0" /><path d="M14.500 11.500v4.300M14.500 9v1.500" stroke="#fff" strokeWidth="1.600" />
        </svg>
        <div className="mt-[9px] ml-[22px] w-[31px] text-center text-[14.500px] leading-[20.500px] text-[#1b1b1b]">
          <T>ENG</T>
          <T>IN</T>
        </div>
        <svg className="mt-[21px] ml-[22px] h-[16px] w-[20px]" viewBox="0 0 20 16" fill="none" strokeWidth="1.400">
          <path d="M.8 6.300a13 13 0 0 1 18.400 0" stroke="#c0c0c0" /><path d="M3.500 8.800a9.200 9.200 0 0 1 13 0" stroke="#222" /><path d="M6.200 11.400a5.400 5.400 0 0 1 7.600 0" stroke="#222" /><circle cx="10" cy="13.700" r="1.800" fill="#222" />
        </svg>
        <svg className="mt-[21px] ml-[9px] h-[15px] w-[20px]" viewBox="0 0 20 15" fill="none" stroke="#222" strokeWidth="1.200">
          <path d="M1 4.700h3L8.500 1v13L4 10.300H1ZM12.300 4.500l6.500 6.500m0-6.500-6.500 6.500" />
        </svg>
        <svg className="mt-[19px] ml-[11px] h-[17px] w-[20px]" viewBox="0 0 20 17">
          <rect x="1" y="5" width="16" height="10.500" rx="2.300" fill="none" stroke="#222" strokeWidth="1.400" /><rect x="3" y="7" width="12" height="6.600" rx=".8" fill="#222" /><path d="M18.300 8v4.500" stroke="#222" strokeWidth="2" />
          <path d="M4 0 0 6.500h2.500L1.500 10.500 6 4.500H3.500Z" fill="#222" stroke="#eee" strokeWidth=".6" />
        </svg>
        <div className="mt-[9px] ml-[19px] w-[78px] text-right text-[14.500px] leading-5 text-[#1b1b1b]">
          <T className="tracking-[-0.200px]">22:43</T>
          <T className="tracking-[0.080px]">14-09-2025</T>
        </div>
      </div>
    </div>
  );
}

export default function App() {
  return (
    <div className="flex h-[1080px] w-[1920px] flex-col overflow-hidden bg-white">
      <TitleBar />
      <Toolbar />
      <div className="flex h-[930px]">
        <TabStrip />
        <div className="flex grow flex-col border-t border-[#c3c7cb]">
          <div className="h-[3px] bg-gradient-to-r from-[#ff4b4b] to-[#fffd80]" />
          <div className="flex grow">
            <Sidebar />
            <Main />
          </div>
        </div>
      </div>
      <Taskbar />
    </div>
  );
}
